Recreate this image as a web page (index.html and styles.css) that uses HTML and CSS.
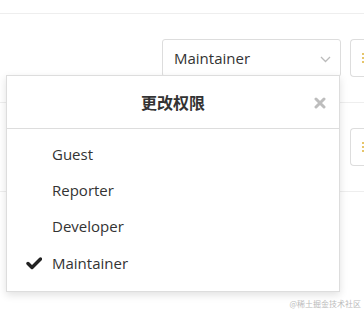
FILE: index.html
```html
<!DOCTYPE html>
<html lang="zh-CN">
<head>
    <meta charset="UTF-8">
    <meta name="viewport" content="width=device-width, initial-scale=1.0">
    <title>更改权限</title>
    <link rel="stylesheet" href="styles.css">
</head>
<body>
    <div class="topbar"></div>

    <div class="member-row">
        <div class="role-select">
            <span class="role-value">Maintainer</span>
            <svg class="chevron" width="11" height="7" viewBox="0 0 11 7">
                <path d="M1 1l4.5 4.5L10 1" fill="none" stroke="#bbb" stroke-width="1.3"/>
            </svg>
        </div>
        <div class="row-btn"><span class="btn-icon"></span></div>
    </div>

    <div class="member-row">
        <div class="role-select ghost"></div>
        <div class="row-btn"><span class="btn-icon"></span></div>
    </div>

    <div class="popup">
        <div class="popup-header">
            <span class="popup-title">更改权限</span>
            <svg class="popup-close" width="12" height="12" viewBox="0 0 12 12">
                <path d="M2 2l8 8M10 2l-8 8" stroke="#bdbdbd" stroke-width="3" stroke-linecap="round"/>
            </svg>
        </div>
        <ul class="role-list">
            <li class="role-item">Guest</li>
            <li class="role-item">Reporter</li>
            <li class="role-item">Developer</li>
            <li class="role-item checked">
                <svg class="check" width="16" height="13" viewBox="0 0 16 13">
                    <path d="M2 6.5l4 4 8.5-8.5" fill="none" stroke="#222" stroke-width="3.4" stroke-linejoin="round" stroke-linecap="round"/>
                </svg>
                Maintainer
            </li>
        </ul>
    </div>

    <div class="watermark">@稀土掘金技术社区</div>
</body>
</html>
```

FILE: styles.css
```css
body {
    margin: 0;
    width: 364px;
    height: 312px;
    overflow: hidden;
    position: relative;
    background: white;
    font-family: "Open Sans", "Noto Sans", "Noto Sans CJK SC", sans-serif;
    color: #333;
}

.topbar {
    height: 13px;
    border-bottom: 1px solid #eee;
}

.member-row {
    height: 88px;
    border-bottom: 1px solid #eee;
    display: flex;
    align-items: center;
    justify-content: flex-end;
    gap: 9px;
}

.role-select {
    width: 179px;
    height: 38px;
    border: 1px solid #ddd;
    border-radius: 3px;
    display: flex;
    align-items: center;
    justify-content: space-between;
    padding: 0 9px 0 11px;
    box-sizing: border-box;
}

.role-select.ghost {
    visibility: hidden;
}

.role-value {
    font-size: 15px;
}

.chevron {
    margin-top: 3px;
}

.row-btn {
    width: 14px;
    height: 38px;
    border: 1px solid #ddd;
    border-right: none;
    border-radius: 4px 0 0 4px;
    box-sizing: border-box;
    display: flex;
    align-items: center;
    justify-content: flex-end;
}

.btn-icon {
    width: 2px;
    height: 11px;
    background: repeating-linear-gradient(#e6c56a 0 2px, transparent 2px 4px);
}

.popup {
    position: absolute;
    left: 6px;
    top: 75px;
    width: 334px;
    background: white;
    border: 1px solid #ddd;
    box-sizing: border-box;
    box-shadow: 0 3px 8px rgba(0, 0, 0, 0.12);
}

.popup-header {
    height: 52px;
    border-bottom: 1px solid #ddd;
    display: flex;
    align-items: center;
    justify-content: center;
    position: relative;
}

.popup-title {
    font-size: 16px;
    font-weight: bold;
    color: #333;
}

.popup-close {
    position: absolute;
    right: 13px;
    top: 21px;
}

.role-list {
    list-style: none;
    margin: 0;
    padding: 7px 0 10px 0;
}

.role-item {
    height: 36px;
    display: flex;
    align-items: center;
    padding-left: 45px;
    font-size: 15px;
    position: relative;
}

.role-item.checked {
    padding-top: 1px;
}

.check {
    position: absolute;
    left: 19px;
    top: 13px;
}

.watermark {
    position: absolute;
    right: 3px;
    bottom: 3px;
    font-size: 8px;
    color: #bbb;
    font-family: "Noto Sans CJK SC", sans-serif;
}
```
